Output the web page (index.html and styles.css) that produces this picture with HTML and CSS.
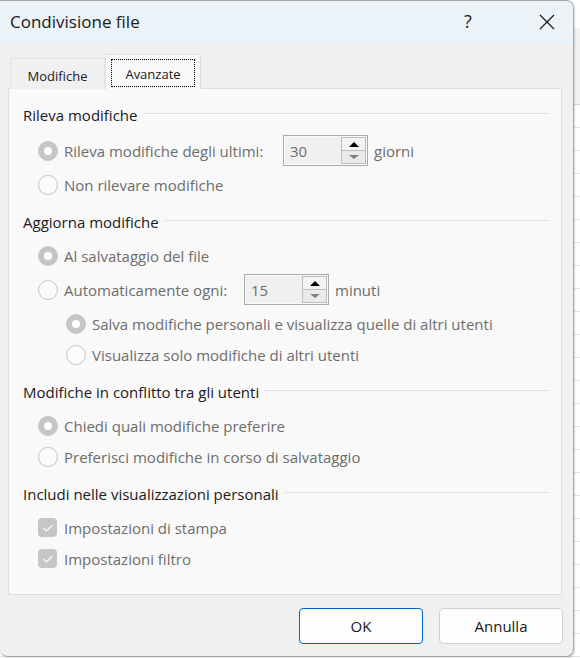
FILE: index.html
```html
<!DOCTYPE html>
<html lang="it">
<head>
<meta charset="utf-8">
<title>Condivisione file</title>
<link rel="stylesheet" href="styles.css">
</head>
<body>
<div class="dialog">
  <div class="titlebar">
    <span class="title">Condivisione file</span>
    <span class="help">?</span>
    <span class="close"><svg width="16" height="16" viewBox="0 0 16 16"><path d="M1 1 L15 15 M15 1 L1 15" stroke="#1a1a1a" stroke-width="1.2" fill="none"/></svg></span>
  </div>
  <div class="body">
    <div class="tabs">
      <div class="tab">Modifiche</div>
      <div class="tab active"><span class="focus">Avanzate</span></div>
    </div>
    <div class="panel">
      <div class="group g1">
        <div class="ghead"><span>Rileva modifiche</span><i></i></div>
        <div class="row first"><span class="radio on"></span><span class="lbl w1">Rileva modifiche degli ultimi:</span>
          <span class="spin"><span class="field">30</span><span class="arrows"><span class="up"></span><span class="down"></span></span></span><span class="unit">giorni</span></div>
        <div class="row sp"><span class="radio"></span><span class="lbl">Non rilevare modifiche</span></div>
      </div>
      <div class="group">
        <div class="ghead"><span>Aggiorna modifiche</span><i></i></div>
        <div class="row"><span class="radio on"></span><span class="lbl">Al salvataggio del file</span></div>
        <div class="row sp"><span class="radio"></span><span class="lbl w2">Automaticamente ogni:</span>
          <span class="spin"><span class="field">15</span><span class="arrows"><span class="up"></span><span class="down"></span></span></span><span class="unit">minuti</span></div>
        <div class="row sp sub"><span class="radio on"></span><span class="lbl">Salva modifiche personali e visualizza quelle di altri utenti</span></div>
        <div class="row sub"><span class="radio"></span><span class="lbl">Visualizza solo modifiche di altri utenti</span></div>
      </div>
      <div class="group">
        <div class="ghead"><span>Modifiche in conflitto tra gli utenti</span><i></i></div>
        <div class="row"><span class="radio on"></span><span class="lbl">Chiedi quali modifiche preferire</span></div>
        <div class="row"><span class="radio"></span><span class="lbl">Preferisci modifiche in corso di salvataggio</span></div>
      </div>
      <div class="group">
        <div class="ghead"><span>Includi nelle visualizzazioni personali</span><i></i></div>
        <div class="row"><span class="check"><svg width="12" height="10" viewBox="0 0 12 10"><path d="M1.5 5 L4.5 8 L10.5 2" stroke="#fff" stroke-width="1.1" fill="none"/></svg></span><span class="lbl">Impostazioni di stampa</span></div>
        <div class="row"><span class="check"><svg width="12" height="10" viewBox="0 0 12 10"><path d="M1.5 5 L4.5 8 L10.5 2" stroke="#fff" stroke-width="1.1" fill="none"/></svg></span><span class="lbl">Impostazioni filtro</span></div>
      </div>
    </div>
    <div class="footer">
      <button class="btn primary">OK</button>
      <button class="btn">Annulla</button>
    </div>
  </div>
</div>
</body>
</html>
```
FILE: styles.css
```css
html, body {
  margin: 0;
  padding: 0;
}
body {
  width: 580px;
  height: 658px;
  overflow: hidden;
  font-family: "Open Sans", "Noto Sans", sans-serif;
  background:
    linear-gradient(#d4d4d4, #d4d4d4) 0 104px / 100% 1px no-repeat,
    linear-gradient(#f3f3f3, #f3f3f3) 0 28px / 100% 76px no-repeat,
    repeating-linear-gradient(to bottom, #ffffff 0, #ffffff 22px, #e2e2e2 22px, #e2e2e2 23px) 0 105px / 100% 100% no-repeat,
    #ffffff;
}
.dialog {
  width: 573px;
  height: 655px;
  background: #f0f0f0;
  border: 1px solid #a6a6a6;
  border-left: none;
  border-radius: 0 8px 8px 8px;
  box-shadow: 1px 1px 2px rgba(0,0,0,0.15);
  display: flex;
  flex-direction: column;
  overflow: hidden;
}
.titlebar {
  height: 43px;
  flex: none;
  background: #ebf3f9;
  display: flex;
  align-items: center;
  padding-left: 10px;
  color: #1a1a1a;
}
.title {
  font-size: 17px;
  flex: 1;
  margin-top: -3px;
}
.help {
  font-size: 18px;
  width: 20px;
  text-align: center;
  margin-right: 61px;
  margin-top: -3px;
}
.close {
  display: flex;
  margin-right: 18px;
  margin-top: -2px;
}
.body {
  flex: 1;
  display: flex;
  flex-direction: column;
  padding: 11px 11px 0 8px;
}
.tabs {
  display: flex;
  align-items: flex-end;
  margin-left: 2px;
  height: 34px;
  position: relative;
  z-index: 1;
  margin-bottom: -1px;
}
.tab {
  width: 95px;
  height: 31px;
  box-sizing: border-box;
  border: 1px solid #e2e2e2;
  border-bottom: none;
  font-size: 13px;
  color: #1a1a1a;
  display: flex;
  align-items: center;
  justify-content: center;
  background: #f0f0f0;
  padding-top: 3px;
}
.tab.active {
  width: 96px;
  height: 35px;
  background: #f9f9f9;
  border-color: #e0e0e0;
  padding: 4px 5px 2px 5px;
  align-items: stretch;
  justify-content: stretch;
}
.focus {
  flex: 1;
  border: 1px dotted #000;
  display: flex;
  align-items: center;
  justify-content: center;
  padding-top: 1px;
}
.panel {
  height: 507px;
  box-sizing: border-box;
  background: #f9f9f9;
  border: 1px solid #dedede;
  padding: 16px 12px 0 14px;
}
.group {
  margin-bottom: 12px;
}
.ghead {
  height: 20px;
  display: flex;
  align-items: center;
  font-size: 15px;
  color: #1a1a1a;
  margin-bottom: 8px;
  white-space: nowrap;
}
.ghead i {
  flex: 1;
  height: 1px;
  background: #dcdcdc;
  margin-left: 6px;
  margin-top: -3px;
}
.g1 .row.first {
  margin-top: 10px;
}
.row {
  height: 31px;
  display: flex;
  align-items: center;
  padding-left: 15px;
  font-size: 15px;
  color: #6d6d6d;
  white-space: nowrap;
}
.row.sp {
  margin-top: 3px;
}
.row.sub {
  padding-left: 43px;
}
.radio {
  width: 20px;
  height: 20px;
  box-sizing: border-box;
  border-radius: 50%;
  border: 1px solid #c4c4c4;
  background: #fbfbfb;
  margin-right: 6px;
  flex: none;
  position: relative;
}
.radio.on {
  background: #c6c6c6;
  border-color: #c6c6c6;
}
.radio.on::after {
  content: "";
  position: absolute;
  left: 5px;
  top: 5px;
  width: 8px;
  height: 8px;
  border-radius: 50%;
  background: #fff;
}
.check {
  width: 19px;
  height: 19px;
  border-radius: 4px;
  background: #c6c6c6;
  margin-right: 7px;
  display: flex;
  align-items: center;
  justify-content: center;
  flex: none;
}
.lbl.w1 {
  width: 199px;
  margin-right: 20px;
}
.lbl.w2 {
  width: 160px;
  margin-right: 20px;
}
.spin {
  width: 85px;
  height: 31px;
  box-sizing: border-box;
  border: 1px solid #ababab;
  background: #fafafa;
  display: flex;
  padding: 1px;
}
.field {
  flex: 1;
  background: #f0f0f0;
  padding-left: 5px;
  font-size: 15px;
  color: #6d6d6d;
  display: flex;
  align-items: center;
}
.arrows {
  width: 25px;
  display: flex;
  flex-direction: column;
  background: #f0f0f0;
}
.arrows span {
  flex: 1;
  box-sizing: border-box;
  border: 1px solid #bdbdbd;
  display: flex;
  align-items: center;
  justify-content: center;
  background: #f4f4f4;
}
.arrows .down {
  border-top: none;
  background: #eaeaea;
}
.arrows .up::after {
  content: "";
  border-left: 5px solid transparent;
  border-right: 5px solid transparent;
  border-bottom: 5px solid #000;
}
.arrows .down::after {
  content: "";
  border-left: 5px solid transparent;
  border-right: 5px solid transparent;
  border-top: 4px solid #808080;
}
.unit {
  margin-left: 6px;
}
.footer {
  display: flex;
  justify-content: flex-end;
  gap: 16px;
  margin-top: 13px;
  margin-right: -1px;
}
.btn {
  width: 124px;
  height: 36px;
  box-sizing: border-box;
  border: 1px solid #cfcfcf;
  border-radius: 4px;
  background: #fdfdfd;
  font-family: "Open Sans", "Noto Sans", sans-serif;
  font-size: 15px;
  color: #1a1a1a;
  padding: 0;
}
.btn.primary {
  border-color: #0067c0;
}
```
